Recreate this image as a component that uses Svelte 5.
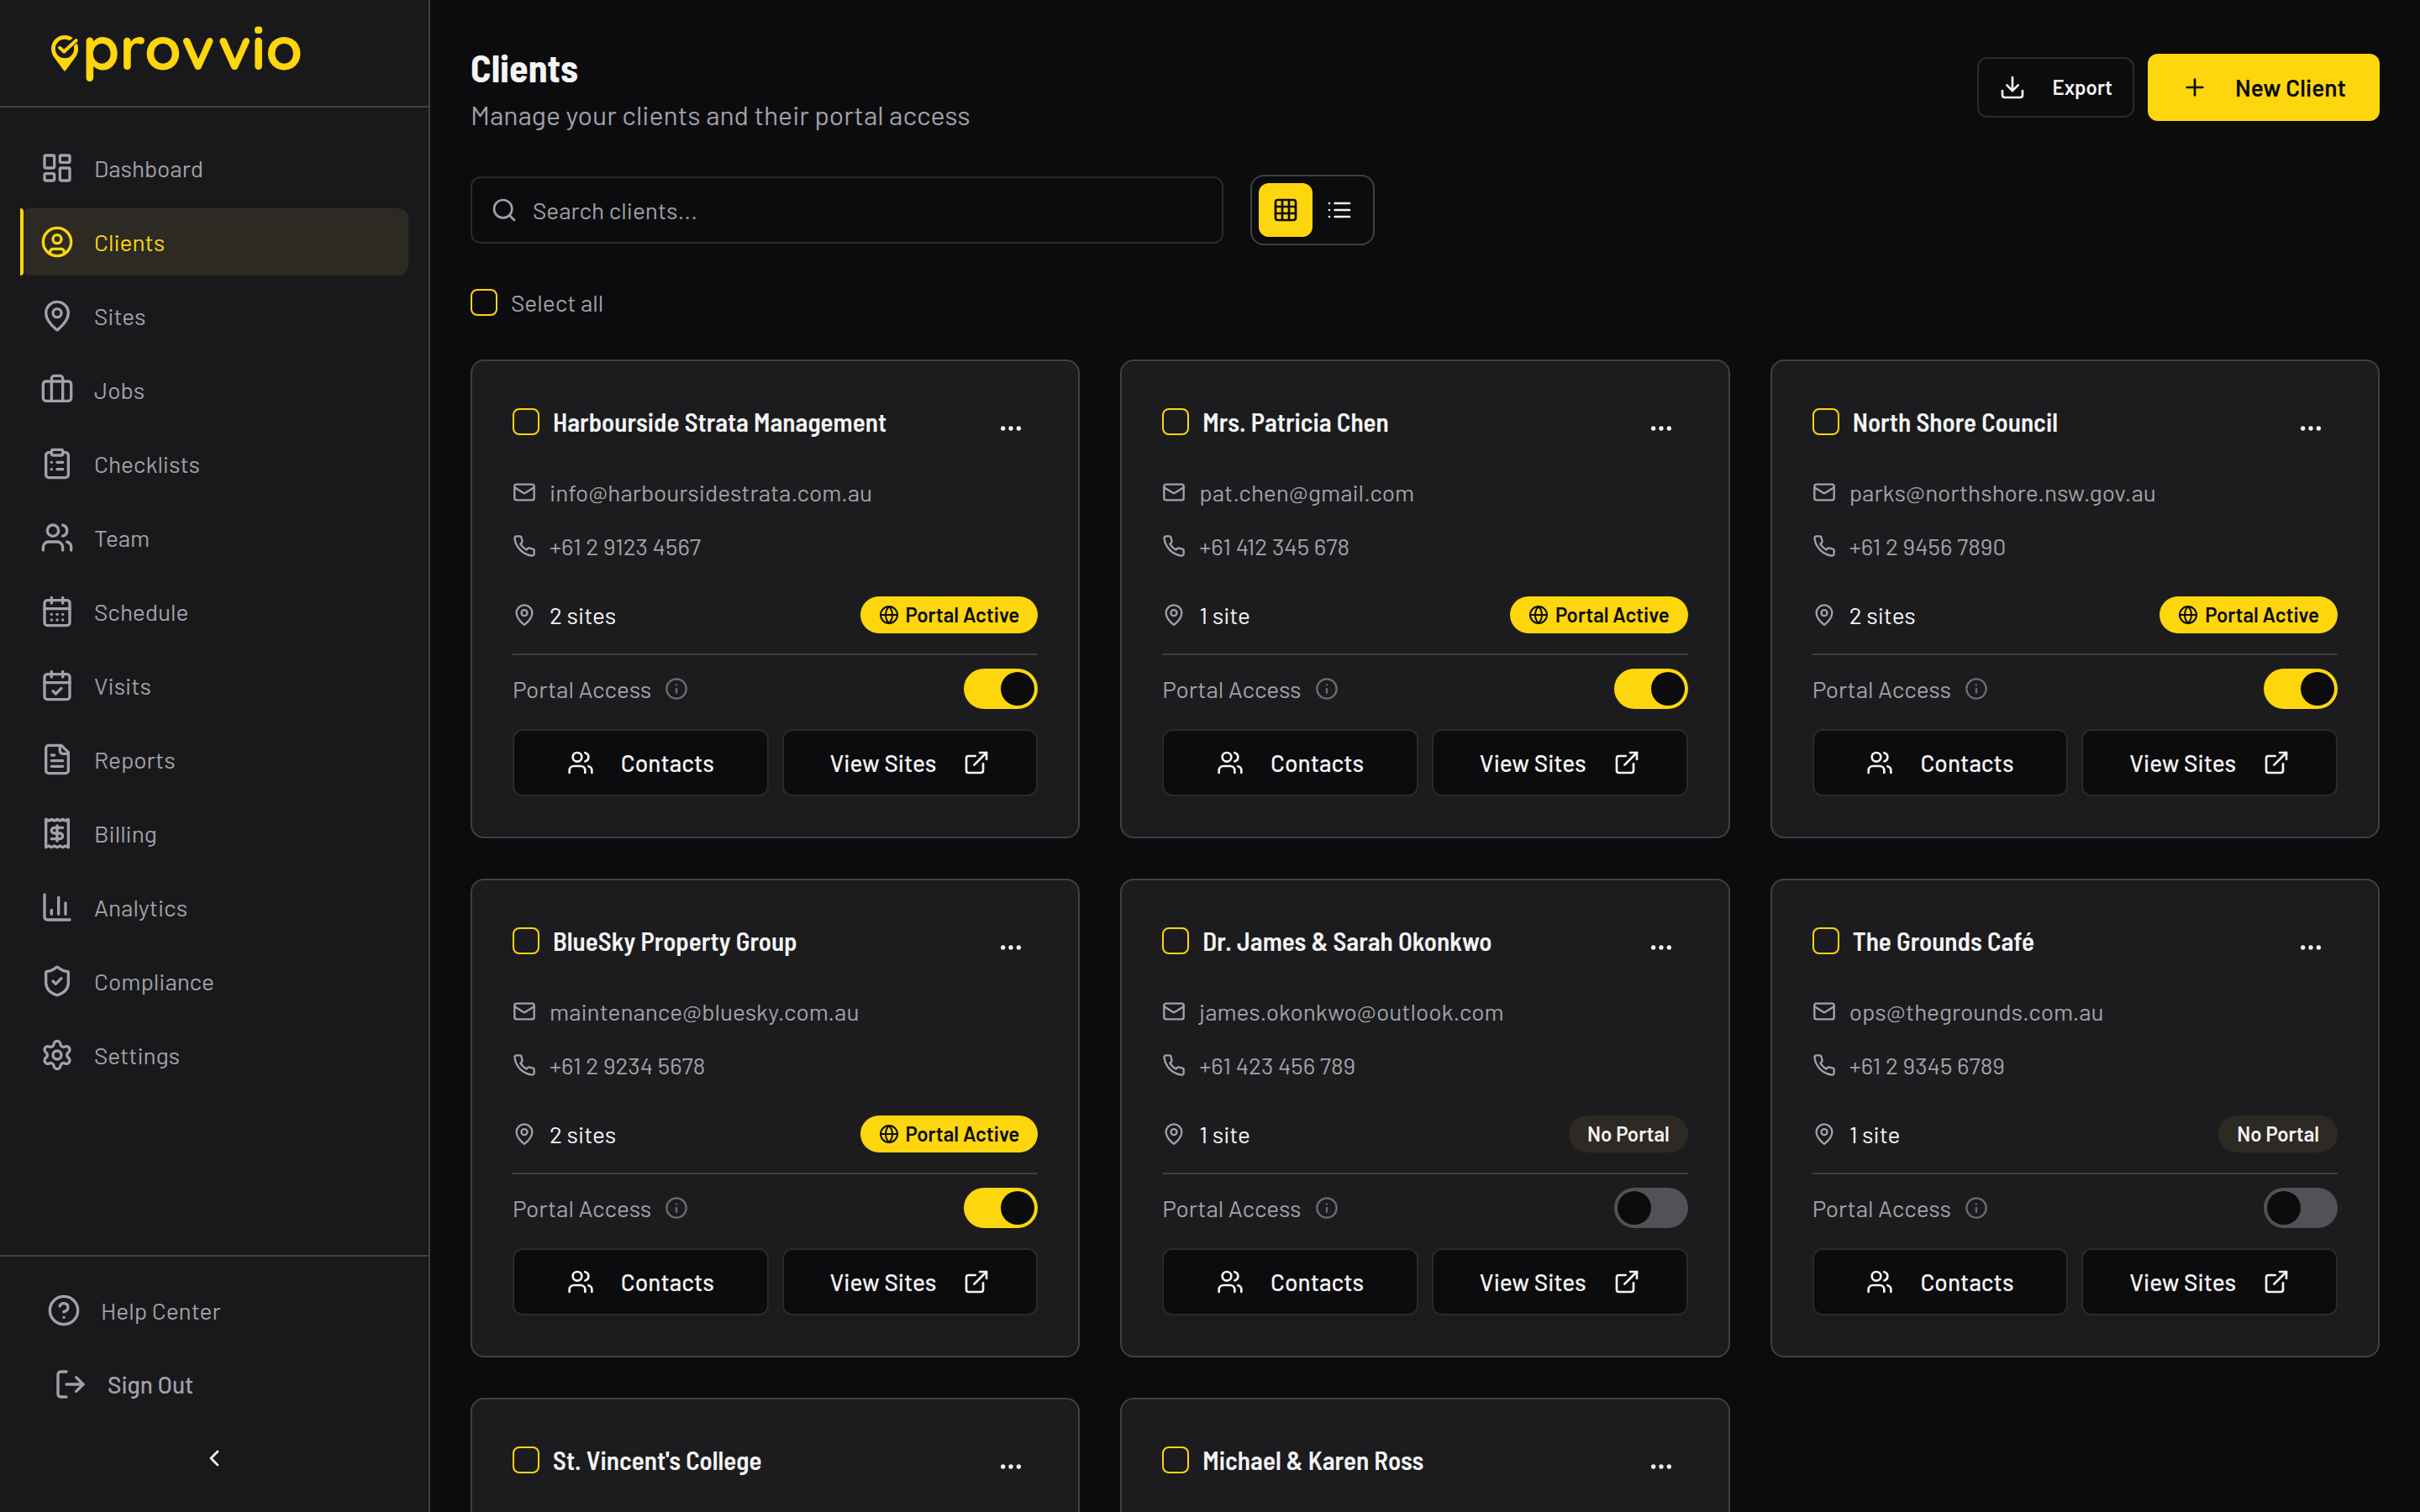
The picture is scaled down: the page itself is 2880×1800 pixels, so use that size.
<script lang="ts">
	const icons = {
		dashboard:
			'<rect width="7" height="9" x="3" y="3" rx="1"/><rect width="7" height="5" x="14" y="3" rx="1"/><rect width="7" height="9" x="14" y="12" rx="1"/><rect width="7" height="5" x="3" y="16" rx="1"/>',
		user: '<circle cx="12" cy="12" r="10"/><circle cx="12" cy="10" r="3"/><path d="M7 20.662V19a2 2 0 0 1 2-2h6a2 2 0 0 1 2 2v1.662"/>',
		pin: '<path d="M20 10c0 4.993-5.539 10.193-7.399 11.799a1 1 0 0 1-1.202 0C9.539 20.193 4 14.993 4 10a8 8 0 0 1 16 0"/><circle cx="12" cy="10" r="3"/>',
		briefcase:
			'<path d="M16 20V4a2 2 0 0 0-2-2h-4a2 2 0 0 0-2 2v16"/><rect width="20" height="14" x="2" y="6" rx="2"/>',
		clipboard:
			'<rect width="8" height="4" x="8" y="2" rx="1"/><path d="M16 4h2a2 2 0 0 1 2 2v14a2 2 0 0 1-2 2H6a2 2 0 0 1-2-2V6a2 2 0 0 1 2-2h2"/><path d="M12 11h4"/><path d="M12 16h4"/><path d="M8 11h.01"/><path d="M8 16h.01"/>',
		users:
			'<path d="M16 21v-2a4 4 0 0 0-4-4H6a4 4 0 0 0-4 4v2"/><circle cx="9" cy="7" r="4"/><path d="M22 21v-2a4 4 0 0 0-3-3.87"/><path d="M16 3.13a4 4 0 0 1 0 7.75"/>',
		calendar:
			'<path d="M8 2v4"/><path d="M16 2v4"/><rect width="18" height="18" x="3" y="4" rx="2"/><path d="M3 10h18"/><path d="M8 14h.01"/><path d="M12 14h.01"/><path d="M16 14h.01"/><path d="M8 18h.01"/><path d="M12 18h.01"/><path d="M16 18h.01"/>',
		calendarCheck:
			'<path d="M8 2v4"/><path d="M16 2v4"/><rect width="18" height="18" x="3" y="4" rx="2"/><path d="M3 10h18"/><path d="m9 16 2 2 4-4"/>',
		file: '<path d="M15 2H6a2 2 0 0 0-2 2v16a2 2 0 0 0 2 2h12a2 2 0 0 0 2-2V7Z"/><path d="M14 2v4a2 2 0 0 0 2 2h4"/><path d="M10 9H8"/><path d="M16 13H8"/><path d="M16 17H8"/>',
		receipt:
			'<path d="M4 2v20l2-1 2 1 2-1 2 1 2-1 2 1 2-1 2 1V2l-2 1-2-1-2 1-2-1-2 1-2-1-2 1Z"/><path d="M16 8h-6a2 2 0 1 0 0 4h4a2 2 0 1 1 0 4H8"/><path d="M12 17.5v-11"/>',
		chart:
			'<path d="M3 3v16a2 2 0 0 0 2 2h16"/><path d="M18 17V9"/><path d="M13 17V5"/><path d="M8 17v-3"/>',
		shield:
			'<path d="M20 13c0 5-3.5 7.5-7.66 8.95a1 1 0 0 1-.67-.01C7.5 20.5 4 18 4 13V6a1 1 0 0 1 1-1c2 0 4.5-1.2 6.24-2.72a1.17 1.17 0 0 1 1.52 0C14.51 3.81 17 5 19 5a1 1 0 0 1 1 1z"/><path d="m9 12 2 2 4-4"/>',
		settings:
			'<path d="M9.671 4.136a2.34 2.34 0 0 1 4.659 0 2.34 2.34 0 0 0 3.319 1.915 2.34 2.34 0 0 1 2.33 4.033 2.34 2.34 0 0 0 0 3.831 2.34 2.34 0 0 1-2.33 4.033 2.34 2.34 0 0 0-3.319 1.915 2.34 2.34 0 0 1-4.659 0 2.34 2.34 0 0 0-3.32-1.915 2.34 2.34 0 0 1-2.33-4.033 2.34 2.34 0 0 0 0-3.831A2.34 2.34 0 0 1 6.35 6.051a2.34 2.34 0 0 0 3.319-1.915"/><circle cx="12" cy="12" r="3"/>',
		help: '<circle cx="12" cy="12" r="10"/><path d="M9.09 9a3 3 0 0 1 5.83 1c0 2-3 3-3 3"/><path d="M12 17h.01"/>',
		logout:
			'<path d="M9 21H5a2 2 0 0 1-2-2V5a2 2 0 0 1 2-2h4"/><path d="m16 17 5-5-5-5"/><path d="M21 12H9"/>',
		chevronLeft: '<path d="m15 18-6-6 6-6"/>',
		download:
			'<path d="M21 15v4a2 2 0 0 1-2 2H5a2 2 0 0 1-2-2v-4"/><path d="m7 10 5 5 5-5"/><path d="M12 15V3"/>',
		plus: '<path d="M5 12h14"/><path d="M12 5v14"/>',
		search: '<circle cx="11" cy="11" r="8"/><path d="m21 21-4.3-4.3"/>',
		grid: '<rect width="18" height="18" x="3" y="3" rx="2"/><path d="M3 9h18"/><path d="M3 15h18"/><path d="M9 3v18"/><path d="M15 3v18"/>',
		list: '<path d="M8 6h13"/><path d="M8 12h13"/><path d="M8 18h13"/><path d="M3 6h.01"/><path d="M3 12h.01"/><path d="M3 18h.01"/>',
		more: '<circle cx="12" cy="12" r="1"/><circle cx="19" cy="12" r="1"/><circle cx="5" cy="12" r="1"/>',
		mail: '<rect width="20" height="16" x="2" y="4" rx="2"/><path d="m22 7-8.97 5.7a1.94 1.94 0 0 1-2.06 0L2 7"/>',
		phone:
			'<path d="M22 16.92v3a2 2 0 0 1-2.18 2 19.79 19.79 0 0 1-8.63-3.07 19.5 19.5 0 0 1-6-6 19.79 19.79 0 0 1-3.07-8.67A2 2 0 0 1 4.11 2h3a2 2 0 0 1 2 1.72 12.84 12.84 0 0 0 .7 2.81 2 2 0 0 1-.45 2.11L8.09 9.91a16 16 0 0 0 6 6l1.27-1.27a2 2 0 0 1 2.11-.45 12.84 12.84 0 0 0 2.81.7A2 2 0 0 1 22 16.92z"/>',
		globe:
			'<circle cx="12" cy="12" r="10"/><path d="M12 2a14.5 14.5 0 0 0 0 20 14.5 14.5 0 0 0 0-20"/><path d="M2 12h20"/>',
		info: '<circle cx="12" cy="12" r="10"/><path d="M12 16v-4"/><path d="M12 8h.01"/>',
		external:
			'<path d="M15 3h6v6"/><path d="M10 14 21 3"/><path d="M18 13v6a2 2 0 0 1-2 2H5a2 2 0 0 1-2-2V8a2 2 0 0 1 2-2h6"/>'
	};

	const navItems = [
		{ label: 'Dashboard', icon: icons.dashboard },
		{ label: 'Clients', icon: icons.user },
		{ label: 'Sites', icon: icons.pin },
		{ label: 'Jobs', icon: icons.briefcase },
		{ label: 'Checklists', icon: icons.clipboard },
		{ label: 'Team', icon: icons.users },
		{ label: 'Schedule', icon: icons.calendar },
		{ label: 'Visits', icon: icons.calendarCheck },
		{ label: 'Reports', icon: icons.file },
		{ label: 'Billing', icon: icons.receipt },
		{ label: 'Analytics', icon: icons.chart },
		{ label: 'Compliance', icon: icons.shield },
		{ label: 'Settings', icon: icons.settings }
	];

	let clients = [
		{
			name: 'Harbourside Strata Management',
			email: 'info@harboursidestrata.com.au',
			phone: '+61 2 9123 4567',
			sites: 2,
			portal: true,
			selected: false
		},
		{
			name: 'Mrs. Patricia Chen',
			email: 'pat.chen@gmail.com',
			phone: '+61 412 345 678',
			sites: 1,
			portal: true,
			selected: false
		},
		{
			name: 'North Shore Council',
			email: 'parks@northshore.nsw.gov.au',
			phone: '+61 2 9456 7890',
			sites: 2,
			portal: true,
			selected: false
		},
		{
			name: 'BlueSky Property Group',
			email: 'maintenance@bluesky.com.au',
			phone: '+61 2 9234 5678',
			sites: 2,
			portal: true,
			selected: false
		},
		{
			name: 'Dr. James & Sarah Okonkwo',
			email: 'james.okonkwo@outlook.com',
			phone: '+61 423 456 789',
			sites: 1,
			portal: false,
			selected: false
		},
		{
			name: 'The Grounds Café',
			email: 'ops@thegrounds.com.au',
			phone: '+61 2 9345 6789',
			sites: 1,
			portal: false,
			selected: false
		},
		{ name: "St. Vincent's College", email: '', phone: '', sites: 1, portal: true, selected: false },
		{ name: 'Michael & Karen Ross', email: '', phone: '', sites: 1, portal: false, selected: false }
	];

	let activeItem = 'Clients';
	let view = 'grid';
	let search = '';

	$: visible = clients.filter((c) => c.name.toLowerCase().includes(search.toLowerCase()));
	$: allSelected = clients.every((c) => c.selected);

	function toggleAll() {
		const selected = !allSelected;
		clients = clients.map((c) => ({ ...c, selected }));
	}
</script>

<div class="shell">
	<aside>
		<a class="logo" href="#home" aria-label="provvio">
			<svg class="mark" viewBox="0 0 34 44" aria-hidden="true">
				<path
					class="drop"
					d="M17 1C26 1 33 8 33 17C33 21 31.500 24.500 29.500 27.500L18 43Q17 44 16 43L4.500 27.500C2.500 24.500 1 21 1 17C1 8 8 1 17 1Z"
				/>
				<circle class="hole" cx="17" cy="17" r="11.200" />
				<path class="gap" d="M20 15 33 4" />
				<path class="tick" d="M11 15.800 16.200 20.500 30.500 7.200" />
			</svg>
			<span>provvio</span>
		</a>

		<nav aria-label="Main">
			{#each navItems as item}
				<a
					href="#{item.label.toLowerCase()}"
					class="nav-item"
					class:active={activeItem === item.label}
					on:click={() => (activeItem = item.label)}
				>
					<svg class="icon large" viewBox="0 0 24 24">{@html item.icon}</svg>
					{item.label}
				</a>
			{/each}
		</nav>

		<div class="bottom">
			<a class="nav-item help" href="#help">
				<svg class="icon large" viewBox="0 0 24 24">{@html icons.help}</svg>
				Help Center
			</a>
			<button class="nav-item sign-out">
				<svg class="icon large" viewBox="0 0 24 24">{@html icons.logout}</svg>
				Sign Out
			</button>
			<button class="collapse" aria-label="Collapse sidebar">
				<svg class="icon" viewBox="0 0 24 24">{@html icons.chevronLeft}</svg>
			</button>
		</div>
	</aside>

	<main>
		<header>
			<div>
				<h1>Clients</h1>
				<p>Manage your clients and their portal access</p>
			</div>
			<div class="actions">
				<button class="btn export">
					<svg class="icon" viewBox="0 0 24 24">{@html icons.download}</svg>
					Export
				</button>
				<button class="btn primary">
					<svg class="icon" viewBox="0 0 24 24">{@html icons.plus}</svg>
					New Client
				</button>
			</div>
		</header>

		<div class="filters">
			<label class="search">
				<svg class="icon" viewBox="0 0 24 24">{@html icons.search}</svg>
				<input
					type="text"
					placeholder="Search clients..."
					aria-label="Search clients"
					bind:value={search}
				/>
			</label>
			<div class="view-toggle">
				<button class:active={view === 'grid'} aria-label="Grid view" on:click={() => (view = 'grid')}>
					<svg class="icon" viewBox="0 0 24 24">{@html icons.grid}</svg>
				</button>
				<button class:active={view === 'list'} aria-label="List view" on:click={() => (view = 'list')}>
					<svg class="icon" viewBox="0 0 24 24">{@html icons.list}</svg>
				</button>
			</div>
		</div>

		<label class="select-all">
			<input type="checkbox" class="check" checked={allSelected} on:change={toggleAll} />
			Select all
		</label>

		<section class="cards" class:list={view === 'list'}>
			{#each visible as client}
				<article>
					<div class="card-head">
						<label class="name">
							<input type="checkbox" class="check" bind:checked={client.selected} />
							<h3>{client.name}</h3>
						</label>
						<button class="more" aria-label="More actions">
							<svg class="icon" viewBox="0 0 24 24">{@html icons.more}</svg>
						</button>
					</div>
					<div class="contact">
						{#if client.email}
							<div class="line">
								<svg class="icon small" viewBox="0 0 24 24">{@html icons.mail}</svg>
								{client.email}
							</div>
						{/if}
						{#if client.phone}
							<div class="line">
								<svg class="icon small" viewBox="0 0 24 24">{@html icons.phone}</svg>
								{client.phone}
							</div>
						{/if}
					</div>
					<div class="sites">
						<div class="line">
							<svg class="icon small" viewBox="0 0 24 24">{@html icons.pin}</svg>
							<span>{client.sites} {client.sites === 1 ? 'site' : 'sites'}</span>
						</div>
						{#if client.portal}
							<span class="badge on">
								<svg class="icon tiny" viewBox="0 0 24 24">{@html icons.globe}</svg>
								Portal Active
							</span>
						{:else}
							<span class="badge">No Portal</span>
						{/if}
					</div>
					<label class="portal">
						<span>Portal Access</span>
						<svg class="icon small info" viewBox="0 0 24 24">{@html icons.info}</svg>
						<input type="checkbox" role="switch" class="switch" bind:checked={client.portal} />
					</label>
					<div class="card-actions">
						<button class="btn">
							<svg class="icon" viewBox="0 0 24 24">{@html icons.users}</svg>
							Contacts
						</button>
						<button class="btn">
							View Sites
							<svg class="icon" viewBox="0 0 24 24">{@html icons.external}</svg>
						</button>
					</div>
				</article>
			{/each}
		</section>
	</main>
</div>

<style>
	:global(body) {
		background: #0c0c0e;
	}

	.shell {
		--yellow: #fdd60d;
		--text: #f4f4f5;
		--muted: #a1a1aa;
		--border: #3f3f46;
		--border-warm: #2d2a24;
		--bg: #0c0c0e;
		--condensed: 'Barlow Semi Condensed', 'Roboto Condensed', 'Liberation Sans Narrow', Roboto,
			sans-serif;
		display: flex;
		height: 100vh;
		overflow: hidden;
		background: var(--bg);
		color: var(--text);
		font-family: Barlow, Roboto, sans-serif;
		font-size: 28px;
		line-height: 40px;
	}

	.shell * {
		box-sizing: border-box;
	}

	button,
	input {
		font: inherit;
		color: inherit;
		margin: 0;
	}

	button {
		background: transparent;
		border: none;
		padding: 0;
		cursor: pointer;
	}

	a {
		color: inherit;
		text-decoration: none;
	}

	.icon {
		width: 32px;
		height: 32px;
		flex-shrink: 0;
		fill: none;
		stroke: currentColor;
		stroke-width: 2;
		stroke-linecap: round;
		stroke-linejoin: round;
	}

	.icon.large {
		width: 40px;
		height: 40px;
	}

	.icon.small {
		width: 28px;
		height: 28px;
	}

	.icon.tiny {
		width: 24px;
		height: 24px;
	}

	aside {
		display: flex;
		flex-direction: column;
		flex: 0 0 512px;
		background: #19191b;
		border-right: 2px solid var(--border);
	}

	.logo {
		display: flex;
		align-items: center;
		gap: 4px;
		height: 128px;
		padding-left: 60px;
		border-bottom: 2px solid var(--border);
		color: var(--yellow);
		font-family: Quicksand, Poppins, Montserrat, Nunito, Lato, sans-serif;
		font-size: 71px;
		font-weight: 700;
		line-height: 80px;
	}

	.logo span {
		padding-bottom: 12px;
	}

	.mark {
		width: 34px;
		height: 44px;
	}

	.drop {
		fill: var(--yellow);
	}

	.hole {
		fill: #19191b;
	}

	.gap,
	.tick {
		fill: none;
		stroke: #19191b;
		stroke-width: 8;
		stroke-linejoin: round;
	}

	.tick {
		stroke: var(--yellow);
		stroke-width: 4;
		stroke-linecap: round;
	}

	nav {
		display: flex;
		flex-direction: column;
		flex: 1;
		gap: 8px;
		padding: 32px 24px;
	}

	.nav-item {
		position: relative;
		display: flex;
		align-items: center;
		gap: 24px;
		height: 80px;
		padding: 0 24px;
		border-radius: 12px;
		color: var(--muted);
	}

	.nav-item.active {
		background: #2d2a24;
		color: var(--yellow);
	}

	.nav-item.active::before {
		content: '';
		position: absolute;
		left: 0;
		top: 0;
		bottom: 0;
		width: 4px;
		background: var(--yellow);
		border-radius: 0 4px 4px 0;
	}

	.bottom {
		display: flex;
		flex-direction: column;
		gap: 8px;
		padding: 24px;
		border-top: 2px solid var(--border);
	}

	.help {
		padding: 0 32px;
	}

	.sign-out {
		padding: 0 40px;
		font-weight: 500;
	}

	.collapse {
		display: flex;
		align-items: center;
		justify-content: center;
		height: 80px;
	}

	main {
		flex: 1;
		min-width: 0;
		padding: 48px;
		overflow-y: auto;
		scrollbar-width: none;
	}

	header {
		display: flex;
		align-items: center;
		justify-content: space-between;
		margin-bottom: 48px;
	}

	h1,
	h3,
	p {
		margin: 0;
	}

	h1 {
		font-family: var(--condensed);
		font-size: 46px;
		font-weight: 700;
		line-height: 64px;
	}

	p {
		color: var(--muted);
		font-size: 32px;
		line-height: 48px;
	}

	.actions {
		display: flex;
		align-items: center;
		gap: 16px;
	}

	.btn {
		display: flex;
		align-items: center;
		justify-content: center;
		gap: 32px;
		height: 80px;
		border: 2px solid var(--border-warm);
		border-radius: 12px;
		background: var(--bg);
		font-weight: 500;
		white-space: nowrap;
	}

	.btn:hover {
		filter: brightness(1.1);
	}

	.btn.export {
		height: 72px;
		padding: 0 24px;
		font-size: 24px;
		font-weight: 600;
	}

	.btn.primary {
		padding: 0 40px;
		border: none;
		background: var(--yellow);
		color: var(--bg);
		font-weight: 600;
	}

	.filters {
		display: flex;
		align-items: center;
		gap: 32px;
		margin-bottom: 48px;
	}

	.search {
		display: flex;
		align-items: center;
		gap: 18px;
		flex: 0 1 896px;
		height: 80px;
		padding: 0 22px;
		border: 2px solid var(--border-warm);
		border-radius: 12px;
		color: var(--muted);
	}

	.search input {
		flex: 1;
		min-width: 0;
		padding: 0;
		background: transparent;
		border: none;
		outline: none;
	}

	.search input::placeholder {
		color: var(--muted);
		opacity: 1;
	}

	.view-toggle {
		display: flex;
		padding: 8px;
		border: 2px solid var(--border);
		border-radius: 16px;
	}

	.view-toggle button {
		display: flex;
		align-items: center;
		justify-content: center;
		width: 64px;
		height: 64px;
		border-radius: 12px;
	}

	.view-toggle button.active {
		background: var(--yellow);
		color: var(--bg);
	}

	.select-all {
		display: flex;
		align-items: center;
		gap: 16px;
		width: fit-content;
		margin-bottom: 48px;
		color: var(--muted);
	}

	.check {
		appearance: none;
		flex-shrink: 0;
		width: 32px;
		height: 32px;
		border: 2px solid var(--yellow);
		border-radius: 8px;
	}

	.check:checked {
		background: var(--yellow);
	}

	.cards {
		display: grid;
		grid-template-columns: repeat(3, minmax(0, 1fr));
		gap: 48px;
	}

	.cards.list {
		grid-template-columns: 1fr;
	}

	article {
		padding: 48px;
		background: #1c1c1e;
		border: 2px solid var(--border);
		border-radius: 16px;
	}

	.card-head {
		display: flex;
		justify-content: space-between;
		align-items: flex-start;
		margin-bottom: 24px;
	}

	.name {
		display: flex;
		align-items: center;
		gap: 16px;
		min-width: 0;
	}

	h3 {
		font-family: var(--condensed);
		font-size: 31px;
		font-weight: 600;
		line-height: 48px;
		white-space: nowrap;
	}

	.more {
		display: flex;
		align-items: center;
		justify-content: center;
		width: 64px;
		height: 64px;
	}

	.contact {
		display: flex;
		flex-direction: column;
		gap: 24px;
		margin-bottom: 40px;
	}

	.line {
		display: flex;
		align-items: center;
		gap: 16px;
		color: var(--muted);
	}

	.line span {
		color: var(--text);
	}

	.sites {
		display: flex;
		align-items: center;
		justify-content: space-between;
		padding-bottom: 24px;
		margin-bottom: 16px;
		border-bottom: 2px solid var(--border);
	}

	.badge {
		display: flex;
		align-items: center;
		gap: 8px;
		height: 44px;
		padding: 0 22px;
		border-radius: 22px;
		background: #2d2a24;
		font-size: 24px;
		font-weight: 600;
	}

	.badge.on {
		background: var(--yellow);
		color: var(--bg);
	}

	.portal {
		display: flex;
		align-items: center;
		gap: 16px;
		margin-bottom: 24px;
		color: var(--muted);
	}

	.info {
		color: #6b6b72;
	}

	.switch {
		appearance: none;
		display: flex;
		width: 88px;
		height: 48px;
		padding: 4px;
		margin-left: auto;
		border-radius: 24px;
		background: #525256;
		cursor: pointer;
	}

	.switch::before {
		content: '';
		width: 40px;
		height: 40px;
		border-radius: 50%;
		background: var(--bg);
	}

	.switch:checked {
		justify-content: flex-end;
		background: var(--yellow);
	}

	.card-actions {
		display: grid;
		grid-template-columns: 1fr 1fr;
		gap: 16px;
	}
</style>
